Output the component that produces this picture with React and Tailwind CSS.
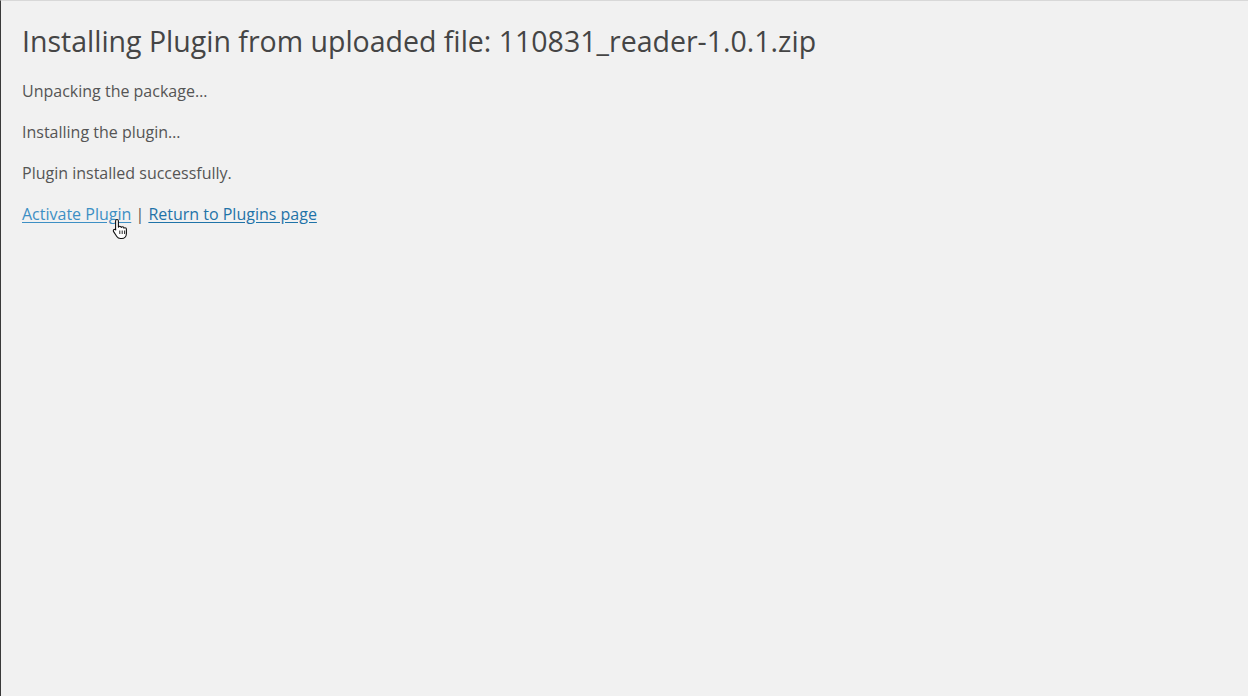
import React from "react";

function HandCursor() {
  return (
    <svg width="16" height="22" viewBox="0 0 16 22" className="absolute left-[111px] top-[217px]">
      <path
        d="M5 1.5c.8 0 1.4.6 1.4 1.4v6.2c.3-.5.8-.8 1.4-.8.8 0 1.3.5 1.4 1.1.3-.4.8-.6 1.3-.6.8 0 1.4.6 1.4 1.3.3-.3.7-.4 1.1-.4.8 0 1.4.6 1.4 1.4v4.4c0 2.8-2 5-4.6 5H8.4c-1.5 0-2.8-.8-3.6-2L1.6 13.6c-.5-.7-.3-1.6.4-2 .6-.4 1.4-.2 1.8.3l-.2-.1V2.9c0-.8.6-1.4 1.4-1.4z"
        fill="#fff"
        stroke="#111"
        strokeWidth="1.1"
        strokeLinejoin="round"
      />
      <path d="M7.8 12.5v3.5M10.2 12.5v3.5M12.6 12.5v3.5" stroke="#111" strokeWidth="0.9" />
    </svg>
  );
}

export default function App() {
  return (
    <div
      className="relative w-[1248px] h-[696px] bg-[#f1f1f1] border-l border-l-[#3a3a3a] border-t border-t-[#d8d8d8] overflow-hidden"
      style={{ fontFamily: '"Open Sans", sans-serif' }}
    >
      <div className="pl-[21px] pt-[21px]">
        <h1 className="text-[28.5px] leading-[38px] text-[#454545] font-normal">
          Installing Plugin from uploaded file: 110831_reader-1.0.1.zip
        </h1>
        <div className="mt-[20px] flex flex-col gap-[19px] text-[16px] leading-[22px] text-[#555]">
          <p>Unpacking the package…</p>
          <p>Installing the plugin…</p>
          <p>Plugin installed successfully.</p>
          <p>
            <a className="text-[#3d8fc4] underline underline-offset-2">Activate Plugin</a>
            <span className="text-[#555]"> | </span>
            <a className="text-[#1f73a8] underline underline-offset-2">Return to Plugins page</a>
          </p>
        </div>
      </div>
      <HandCursor />
    </div>
  );
}
